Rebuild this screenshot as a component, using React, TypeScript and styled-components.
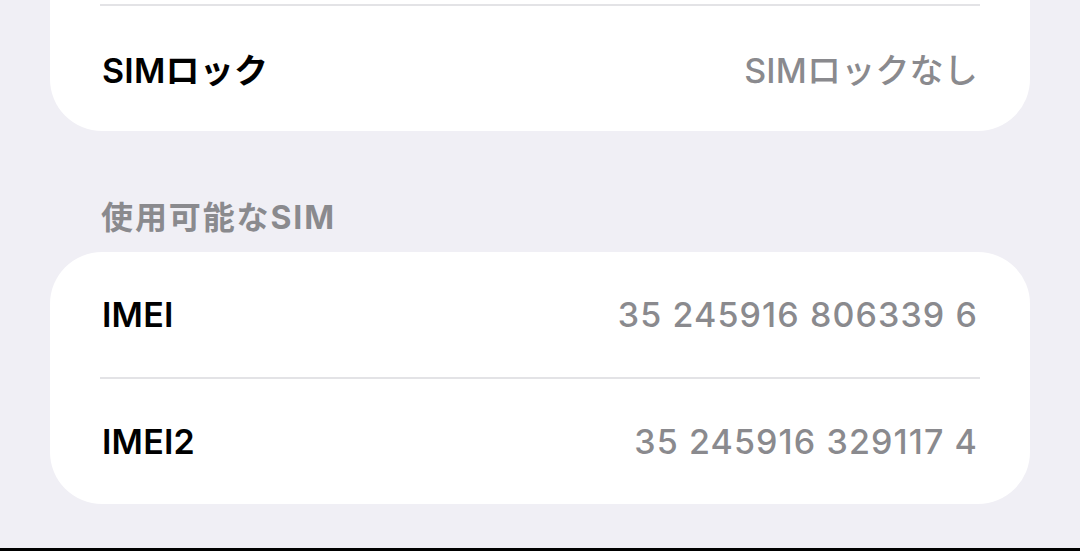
import React from "react";
import styled, { createGlobalStyle } from "styled-components";

const Global = createGlobalStyle`
  html, body { margin: 0; padding: 0; background: #f0eff5; }
  body { font-family: Inter, "Noto Sans CJK JP", sans-serif; -webkit-font-smoothing: antialiased; }
`;

const Page = styled.div`
  width: 1080px;
  height: 551px;
  display: flex;
  flex-direction: column;
  background: #f0eff5;
  overflow: hidden;
`;

const Content = styled.div`
  flex: 1;
  padding: 0 50px;
  display: flex;
  flex-direction: column;
`;

const Card = styled.div<{ $clipTop?: boolean }>`
  background: #ffffff;
  border-radius: ${(p) => (p.$clipTop ? "0 0 52px 52px" : "52px")};
  padding-top: ${(p) => (p.$clipTop ? "4px" : "0")};
  display: flex;
  flex-direction: column;
`;

const Row = styled.div`
  height: 125px;
  padding: 0 52px;
  display: flex;
  align-items: center;
  justify-content: space-between;
  font-size: 34px;
  letter-spacing: 0.2px;
`;

const Label = styled.span`
  color: #000000;
  font-weight: 600;
`;

const Value = styled.span<{ $tracking?: number }>`
  color: #8a8a8e;
  font-weight: 500;
  letter-spacing: ${(p) => p.$tracking ?? 0.2}px;
`;

const Separator = styled.div`
  height: 2px;
  margin: 0 50px;
  background: #e3e3e6;
`;

const SectionHeader = styled.div`
  padding: 68px 51px 16px;
  height: 37px;
  line-height: 37px;
  font-size: 32px;
  font-weight: 700;
  letter-spacing: 1.9px;
  color: #8a8a8e;
`;

const BottomBar = styled.div`
  height: 3px;
  background: #000000;
`;

export default function App() {
  return (
    <>
      <Global />
      <Page>
        <Content>
          <Card $clipTop>
            <Separator />
            <Row>
              <Label>SIMロック</Label>
              <Value>SIMロックなし</Value>
            </Row>
          </Card>
          <SectionHeader>使用可能なSIM</SectionHeader>
          <Card>
            <Row>
              <Label>IMEI</Label>
              <Value $tracking={1.1}>35 245916 806339 6</Value>
            </Row>
            <Separator />
            <Row>
              <Label>IMEI2</Label>
              <Value $tracking={1.1}>35 245916 329117 4</Value>
            </Row>
          </Card>
        </Content>
        <BottomBar />
      </Page>
    </>
  );
}
